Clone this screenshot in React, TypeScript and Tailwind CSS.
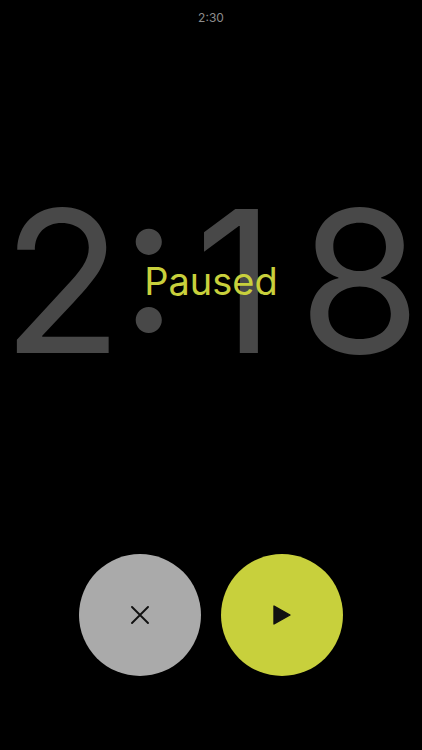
export default function App() {
  return (
    <main className="flex min-h-screen flex-col items-center bg-black font-['Inter',sans-serif] pb-[74px]">
      <p className="pt-2 text-[12px] leading-5 text-[#8c8c8c]">2:30</p>
      <section className="grid w-full grow grid-cols-1 place-items-center overflow-hidden pb-5">
        <time className="col-start-1 row-start-1 flex w-full max-w-md text-center text-[198px] leading-none text-[#484848] [font-feature-settings:'case']">
          <span className="min-w-0 flex-1">2</span>
          <span className="flex w-12 justify-center">:</span>
          <span className="min-w-0 flex-1">1</span>
          <span className="min-w-0 flex-1">8</span>
        </time>
        <h1 className="z-10 col-start-1 row-start-1 text-[38px] leading-none text-[#c8d03c]">Paused</h1>
      </section>
      <div className="flex justify-center gap-5">
        <button type="button" aria-label="Cancel" className="grid size-[122px] place-items-center rounded-full bg-[#aaaaaa]">
          <svg viewBox="0 0 18 18" className="size-[18px]" fill="none" stroke="#111" strokeWidth="1.9" strokeLinecap="round">
            <path d="M1 1L17 17M17 1L1 17" />
          </svg>
        </button>
        <button type="button" aria-label="Resume" className="grid size-[122px] place-items-center rounded-full bg-[#c8d03c]">
          <svg viewBox="0 0 20 20" className="size-5" fill="#111" stroke="#111" strokeWidth="1.4" strokeLinejoin="round">
            <path d="M2 1V19L18 10Z" />
          </svg>
        </button>
      </div>
    </main>
  );
}
